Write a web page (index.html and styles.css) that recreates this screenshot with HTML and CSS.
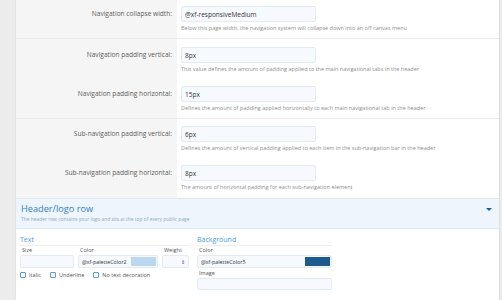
FILE: index.html
```html
<!DOCTYPE html>
<html lang="en">
<head>
    <meta charset="UTF-8">
    <title>Style properties</title>
    <link rel="stylesheet" href="styles.css">
</head>
<body>

<div class="side-strip"></div>

<div class="panel">
    <div class="row-group first">
        <div class="form-row">
            <div class="row-label">Navigation collapse width:</div>
            <div class="row-field">
                <input class="input" type="text" value="@xf-responsiveMedium">
                <div class="hint">Below this page width, the navigation system will collapse down into an off canvas menu</div>
            </div>
        </div>
    </div>

    <div class="row-group">
        <div class="form-row">
            <div class="row-label">Navigation padding vertical:</div>
            <div class="row-field">
                <input class="input" type="text" value="8px">
                <div class="hint">This value defines the amount of padding applied to the main navigational tabs in the header</div>
            </div>
        </div>
        <div class="form-row">
            <div class="row-label">Navigation padding horizontal:</div>
            <div class="row-field">
                <input class="input" type="text" value="15px">
                <div class="hint">Defines the amount of padding applied horizontally to each main navigational tab in the header</div>
            </div>
        </div>
    </div>

    <div class="row-group last">
        <div class="form-row">
            <div class="row-label">Sub-navigation padding vertical:</div>
            <div class="row-field">
                <input class="input" type="text" value="6px">
                <div class="hint">Defines the amount of vertical padding applied to each item in the sub-navigation bar in the header</div>
            </div>
        </div>
        <div class="form-row">
            <div class="row-label">Sub-navigation padding horizontal:</div>
            <div class="row-field">
                <input class="input" type="text" value="8px">
                <div class="hint">The amount of horizontal padding for each sub-navigation element</div>
            </div>
        </div>
    </div>

    <div class="block-header">
        <div>
            <h3 class="block-title">Header/logo row</h3>
            <div class="block-desc">The header row contains your logo and sits at the top of every public page</div>
        </div>
        <span class="block-toggle"></span>
    </div>

    <div class="block-body">
        <div class="prop-group text-group">
            <h4 class="prop-title">Text</h4>
            <div class="prop-fields">
                <div class="prop-cell size-cell">
                    <label>Size</label>
                    <input class="input small" type="text" value="">
                </div>
                <div class="prop-cell color-cell">
                    <label>Color</label>
                    <div class="input small color-input">
                        <span class="color-text">@xf-paletteColor2</span>
                        <span class="swatch light"></span>
                    </div>
                </div>
                <div class="prop-cell weight-cell">
                    <label>Weight</label>
                    <div class="input small select-input"><span class="spinner">&#8661;</span></div>
                </div>
            </div>
            <div class="checks">
                <label class="check"><span class="box"></span>Italic</label>
                <label class="check"><span class="box"></span>Underline</label>
                <label class="check"><span class="box"></span>No text decoration</label>
            </div>
        </div>

        <div class="prop-group bg-group">
            <h4 class="prop-title">Background</h4>
            <div class="prop-fields column">
                <div class="prop-cell">
                    <label>Color</label>
                    <div class="input small color-input">
                        <span class="color-text">@xf-paletteColor5</span>
                        <span class="swatch dark"></span>
                    </div>
                </div>
                <div class="prop-cell">
                    <label class="spaced">Image</label>
                    <input class="input small image-input" type="text" value="">
                </div>
            </div>
        </div>
    </div>
</div>

</body>
</html>
```

FILE: styles.css
```css
body {
    margin: 0;
    height: 300px;
    display: flex;
    background-color: #ececec;
    font-family: "Open Sans", "Noto Sans", Arial, sans-serif;
    color: #4b4b4b;
    overflow: hidden;
}
.side-strip {
    width: 15px;
    border-right: 1px solid #e2e2e2;
}
.panel {
    flex: 1;
    background-color: #fff;
    border-right: 1px solid #dedede;
    margin-right: 2px;
}
.row-group {
    background: linear-gradient(to right, #f5f5f5 161px, #fff 161px);
    border-bottom: 1px solid #ececec;
    padding: 8px 0 6px;
}
.row-group.first {
    padding-top: 6px;
    padding-bottom: 6px;
}
.row-group.last {
    padding-top: 7px;
    padding-bottom: 7px;
    border-bottom: 1px solid #dbe7f3;
}
.form-row {
    display: grid;
    grid-template-columns: 161px 1fr;
}
.form-row + .form-row {
    margin-top: 13px;
}
.row-label {
    font-size: 6.6px;
    line-height: 16px;
    text-align: right;
    padding-right: 5px;
    color: #5c5c5c;
}
.row-field {
    padding-left: 4px;
}
.input {
    display: block;
    box-sizing: border-box;
    width: 135px;
    height: 16px;
    margin: 0;
    padding: 0 3px;
    border: 1px solid #e3eaf1;
    border-radius: 2px;
    background-color: #f6fafe;
    font-family: inherit;
    font-size: 6.5px;
    color: #333;
}
.hint {
    margin-top: 2px;
    font-size: 5.5px;
    line-height: 8px;
    color: #8e8e8e;
    white-space: nowrap;
}
.block-header {
    display: flex;
    justify-content: space-between;
    align-items: flex-start;
    background-color: #eef5fc;
    border-bottom: 1px solid #dce8f4;
    padding: 3px 7px 5px 5px;
}
.block-title {
    margin: 0;
    font-size: 9.2px;
    font-weight: normal;
    line-height: 13px;
    color: #3480bd;
}
.block-desc {
    font-size: 4.9px;
    line-height: 8px;
    color: #8aa9c4;
}
.block-toggle {
    margin-top: 6px;
    width: 0;
    height: 0;
    border-left: 3px solid transparent;
    border-right: 3px solid transparent;
    border-top: 3px solid #1d5f96;
}
.block-body {
    display: flex;
    gap: 8px;
    padding: 6px 4px 0;
}
.prop-title {
    margin: 0;
    font-size: 7px;
    font-weight: normal;
    line-height: 10px;
    color: #4a9fe0;
    border-bottom: 1px solid #eeeeee;
}
.text-group {
    width: 169px;
}
.bg-group {
    width: 135px;
}
.prop-fields {
    display: flex;
    gap: 4px;
}
.prop-fields.column {
    flex-direction: column;
    gap: 0;
}
.prop-cell label {
    display: block;
    margin-top: 1px;
    font-size: 5.5px;
    line-height: 7px;
    padding-left: 2px;
    color: #555;
}
.prop-cell label.spaced {
    margin-top: 2px;
}
.input.small {
    width: 100%;
    height: 13px;
    margin-top: 1px;
}
.input.image-input {
    height: 12px;
}
.size-cell {
    width: 54px;
}
.color-cell {
    width: 80px;
}
.weight-cell {
    width: 27px;
}
.color-input {
    display: flex;
    align-items: center;
    justify-content: space-between;
    padding: 1px 1px 1px 3px;
}
.color-text {
    font-size: 5.3px;
    white-space: nowrap;
}
.swatch {
    flex: none;
    width: 25px;
    height: 9px;
}
.swatch.light {
    background-color: #bcd8f1;
}
.swatch.dark {
    background-color: #1e5a8c;
}
.select-input {
    display: flex;
    justify-content: flex-end;
    align-items: center;
}
.spinner {
    font-size: 5px;
    color: #555;
}
.checks {
    display: flex;
    gap: 9px;
    margin-top: 3px;
}
.check {
    display: flex;
    align-items: center;
    gap: 3px;
    font-size: 5.5px;
    line-height: 8px;
    color: #555;
}
.box {
    width: 4px;
    height: 4px;
    border: 1px solid #5b9bd5;
    border-radius: 1px;
}
```
